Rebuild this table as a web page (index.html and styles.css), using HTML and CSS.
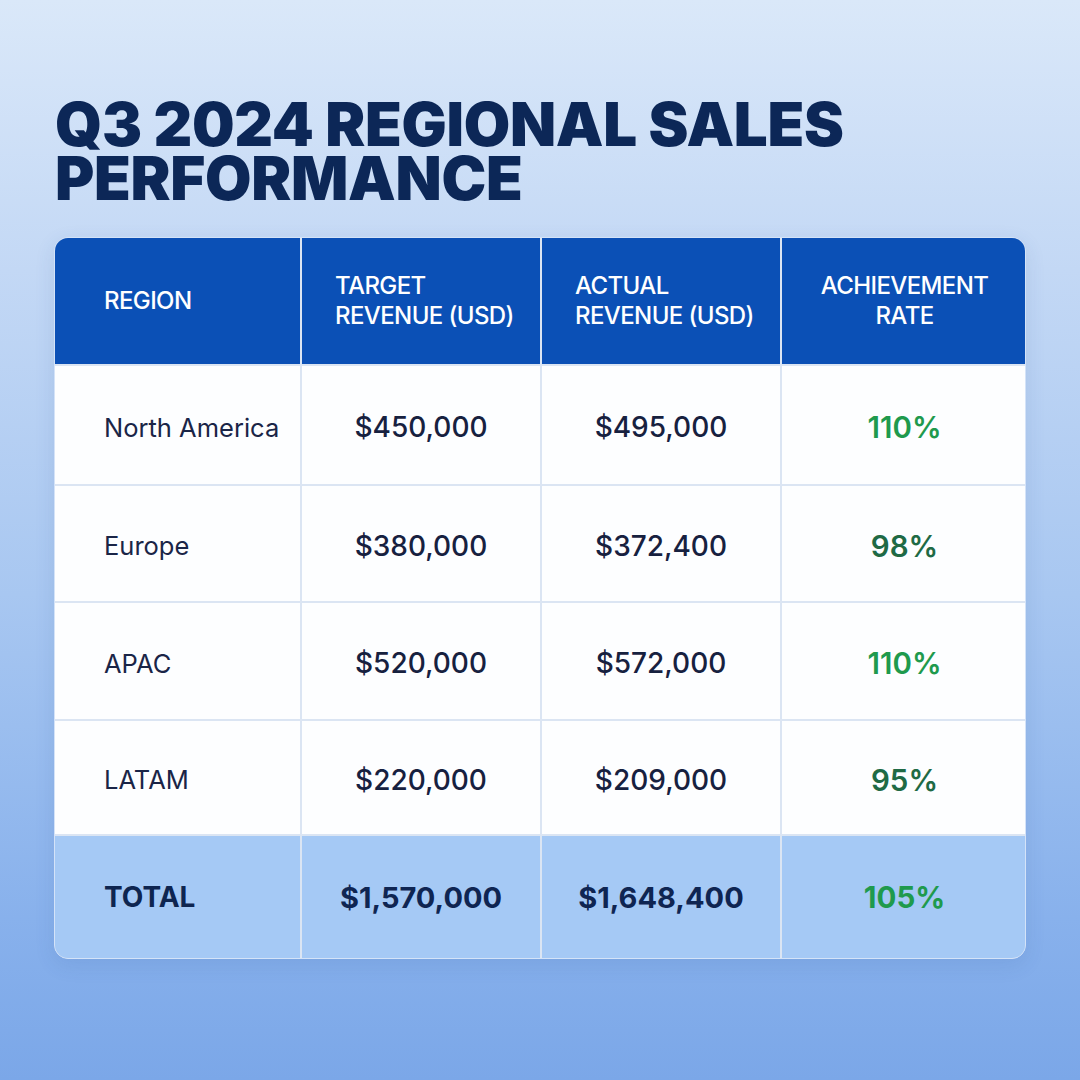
FILE: index.html
```html
<!DOCTYPE html>
<html lang="en">
<head>
<meta charset="utf-8">
<title>Q3 2024 Regional Sales Performance</title>
<link rel="stylesheet" href="styles.css">
</head>
<body>
<main class="page">
  <h1 class="title"><span class="title-line">Q3 2024 REGIONAL SALES</span><span class="title-line">PERFORMANCE</span></h1>
  <div class="table">
    <div class="cell head left">REGION</div>
    <div class="cell head left-pad">TARGET<br>REVENUE (USD)</div>
    <div class="cell head left-pad">ACTUAL<br>REVENUE (USD)</div>
    <div class="cell head center">ACHIEVEMENT<br>RATE</div>

    <div class="cell body left name">North America</div>
    <div class="cell body center num">$450,000</div>
    <div class="cell body center num">$495,000</div>
    <div class="cell body center rate good">110%</div>

    <div class="cell body left name">Europe</div>
    <div class="cell body center num">$380,000</div>
    <div class="cell body center num">$372,400</div>
    <div class="cell body center rate low">98%</div>

    <div class="cell body left name">APAC</div>
    <div class="cell body center num">$520,000</div>
    <div class="cell body center num">$572,000</div>
    <div class="cell body center rate good">110%</div>

    <div class="cell body left name">LATAM</div>
    <div class="cell body center num">$220,000</div>
    <div class="cell body center num">$209,000</div>
    <div class="cell body center rate low">95%</div>

    <div class="cell total left name-total">TOTAL</div>
    <div class="cell total center num-total">$1,570,000</div>
    <div class="cell total center num-total">$1,648,400</div>
    <div class="cell total center rate good bold">105%</div>
  </div>
</main>
</body>
</html>
```

FILE: styles.css
```css
* { box-sizing: border-box; }
html, body {
  margin: 0;
  padding: 0;
}
body {
  width: 1080px;
  height: 1080px;
  overflow: hidden;
  font-family: "Inter", "Liberation Sans", sans-serif;
  background: linear-gradient(180deg, #dae8f9 0%, #c3d8f5 25%, #a8c7f1 55%, #88b1ec 85%, #7ba7e8 100%);
}
.page {
  padding: 97px 54px 0 54px;
}
.title {
  margin: 0 0 32px 1px;
  font-family: "Inter", "Liberation Sans", sans-serif;
  font-weight: 900;
  font-size: 60px;
  line-height: 54px;
  letter-spacing: -0.3px;
  color: #0c2757;
}
.title-line {
  display: block;
  height: 54px;
}
.table {
  display: grid;
  grid-template-columns: 245px 238px 238px 245px;
  grid-template-rows: 126px 118px 115px 116px 113px 122px;
  gap: 2px;
  width: 972px;
  background: #dbe5f3;
  border: 1px solid #d4e3f8;
  border-radius: 14px;
  overflow: hidden;
  box-shadow: 0 6px 20px rgba(40, 80, 150, 0.12);
}
.cell {
  display: flex;
  align-items: center;
}
.head {
  background: #0b50b6;
  color: #ffffff;
  font-size: 24px;
  line-height: 30px;
  font-weight: 500;
  letter-spacing: -0.6px;
}
.left { padding-left: 49px; }
.left-pad { padding-left: 33px; }
.center { justify-content: center; text-align: center; }
.body { background: #fdfeff; }
.total { background: #a5c9f5; }
.name {
  font-size: 25.5px;
  font-weight: 400;
  color: #1a2547;
  padding-top: 4px;
}
.num {
  font-size: 28px;
  font-weight: 500;
  color: #17213f;
  padding-top: 4px;
}
.rate {
  font-size: 29.5px;
  font-weight: 600;
  padding-top: 4px;
}
.good { color: #1f9a4d; }
.low { color: #1f6a45; }
.name-total {
  font-size: 28px;
  font-weight: 700;
  color: #0e2550;
}
.num-total {
  font-size: 29px;
  font-weight: 700;
  color: #0f2552;
}
.total.rate { padding-top: 0; }
.bold { font-weight: 700; }
```
